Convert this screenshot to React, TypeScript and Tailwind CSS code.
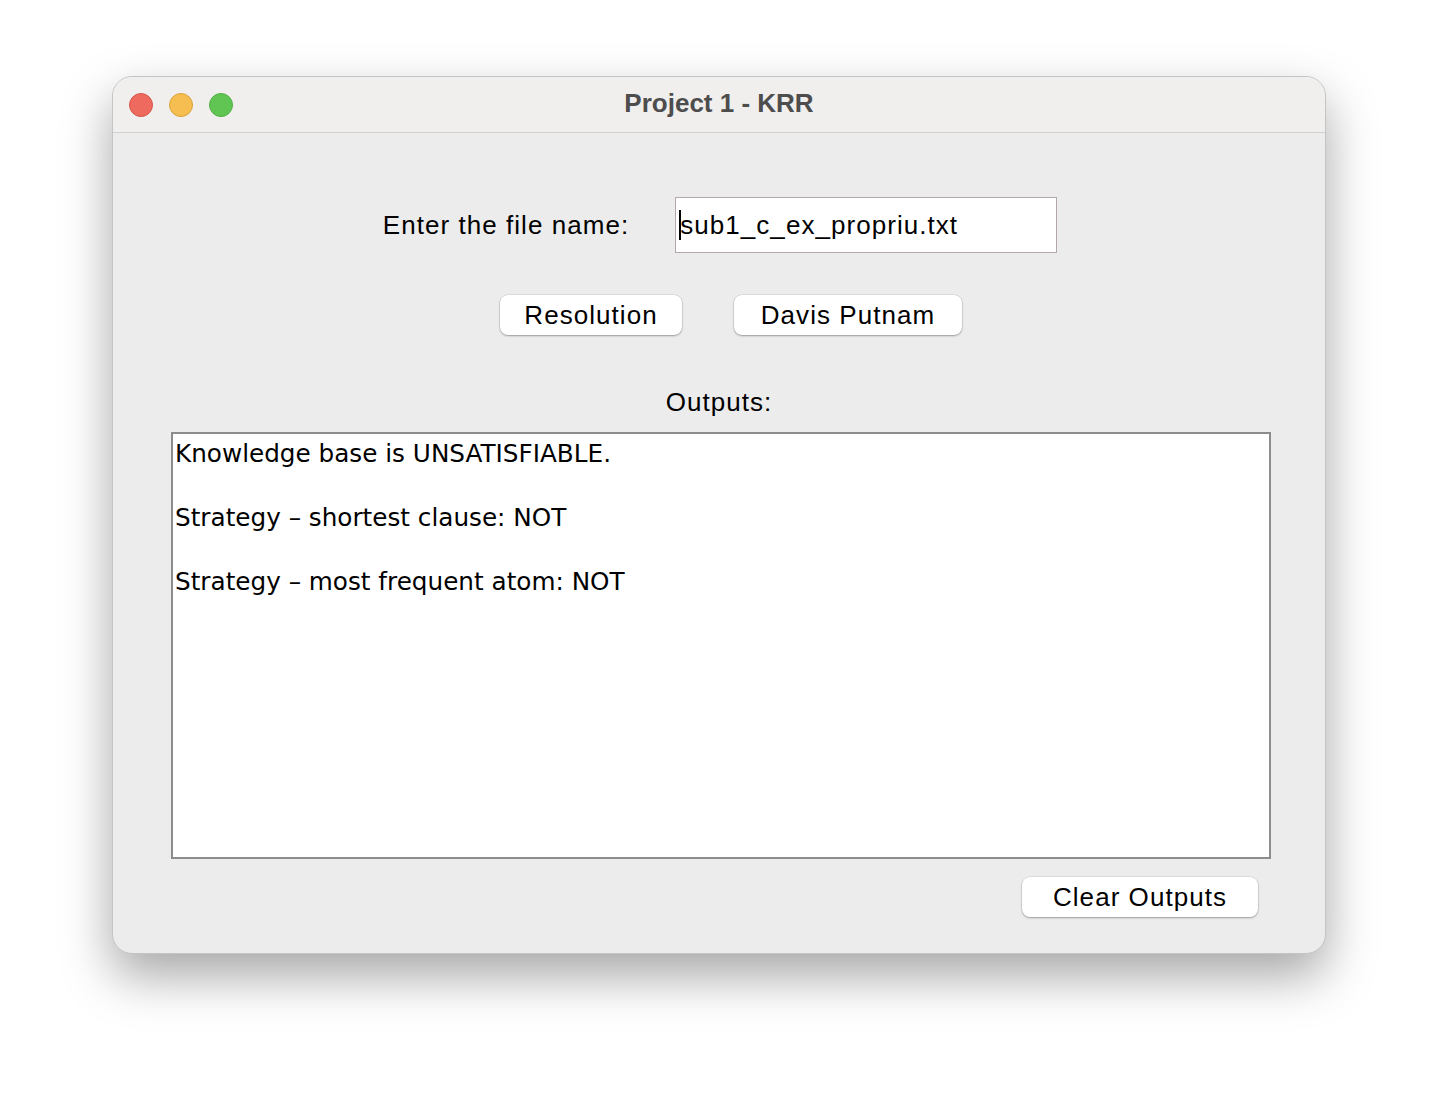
function TrafficLight({color, ring}:{color: string, ring: string}) {
    return <div className={`w-6 h-6 rounded-full border ${color} ${ring}`}/>
}

function MacButton({label, width}:{label: string, width: string}) {
    return <button className={`${width} h-10 rounded-lg bg-white shadow-[0_1px_2px_rgba(0,0,0,0.3),0_0_0_0.5px_rgba(0,0,0,0.12)] text-[26px] tracking-[1.05px] leading-none text-black`}>
        {label}
    </button>
}

export default function App() {
    return <div className="w-[1438px] h-[1102px] bg-white flex items-start justify-center pt-[76px] font-['Liberation_Sans',Arial,sans-serif]">
        <div className="w-[1214px] h-[878px] rounded-[20px] bg-[#ececec] border border-[#c4c4c4] shadow-[0_22px_50px_rgba(0,0,0,0.35)] overflow-hidden flex flex-col">
            <div className="h-[56px] bg-[#f0efee] border-b border-[#d0d0d0] flex flex-row items-center relative">
                <div className="flex flex-row gap-4 pl-4">
                    <TrafficLight color="bg-[#ee6a5f]" ring="border-[#d5554a]"/>
                    <TrafficLight color="bg-[#f6be50]" ring="border-[#d9a23b]"/>
                    <TrafficLight color="bg-[#61c554]" ring="border-[#4fae42]"/>
                </div>
                <div className="absolute inset-0 flex items-center justify-center pb-[2px] text-[26px] font-bold text-[#4d4d4d] pointer-events-none">
                    Project 1 - KRR
                </div>
            </div>

            <div className="flex flex-col items-center pt-[64px]">
                <div className="flex flex-row items-center gap-[46px] pl-[2px]">
                    <div className="text-[26px] tracking-[1.05px] text-black">Enter the file name:</div>
                    <div className="w-[382px] h-[56px] bg-white border border-[#b3a8ae] flex flex-row items-center pl-[3px]">
                        <div className="w-[2px] h-[30px] bg-black"/>
                        <div className="text-[26px] tracking-[1.05px] text-black -ml-[1px]">sub1_c_ex_propriu.txt</div>
                    </div>
                </div>

                <div className="flex flex-row gap-[52px] mt-[42px] pl-[24px]">
                    <MacButton label="Resolution" width="w-[182px]"/>
                    <MacButton label="Davis Putnam" width="w-[228px]"/>
                </div>

                <div className="text-[26px] tracking-[1.05px] text-black mt-[48px]">Outputs:</div>
            </div>

            <div className="pl-[58px] pr-[54px] mt-[10px]">
                <div className="h-[427px] bg-white border-2 border-[#8c8c8c] pl-[2px] pt-[4px] font-['DejaVu_Sans',sans-serif] text-[24.7px] leading-[32px] text-black">
                    <div>Knowledge base is UNSATISFIABLE.</div>
                    <div className="h-[32px]"/>
                    <div>Strategy – shortest clause: NOT</div>
                    <div className="h-[32px]"/>
                    <div>Strategy – most frequent atom: NOT</div>
                </div>
            </div>

            <div className="flex flex-row justify-end pr-[67px] mt-[18px]">
                <MacButton label="Clear Outputs" width="w-[236px]"/>
            </div>
        </div>
    </div>
}
